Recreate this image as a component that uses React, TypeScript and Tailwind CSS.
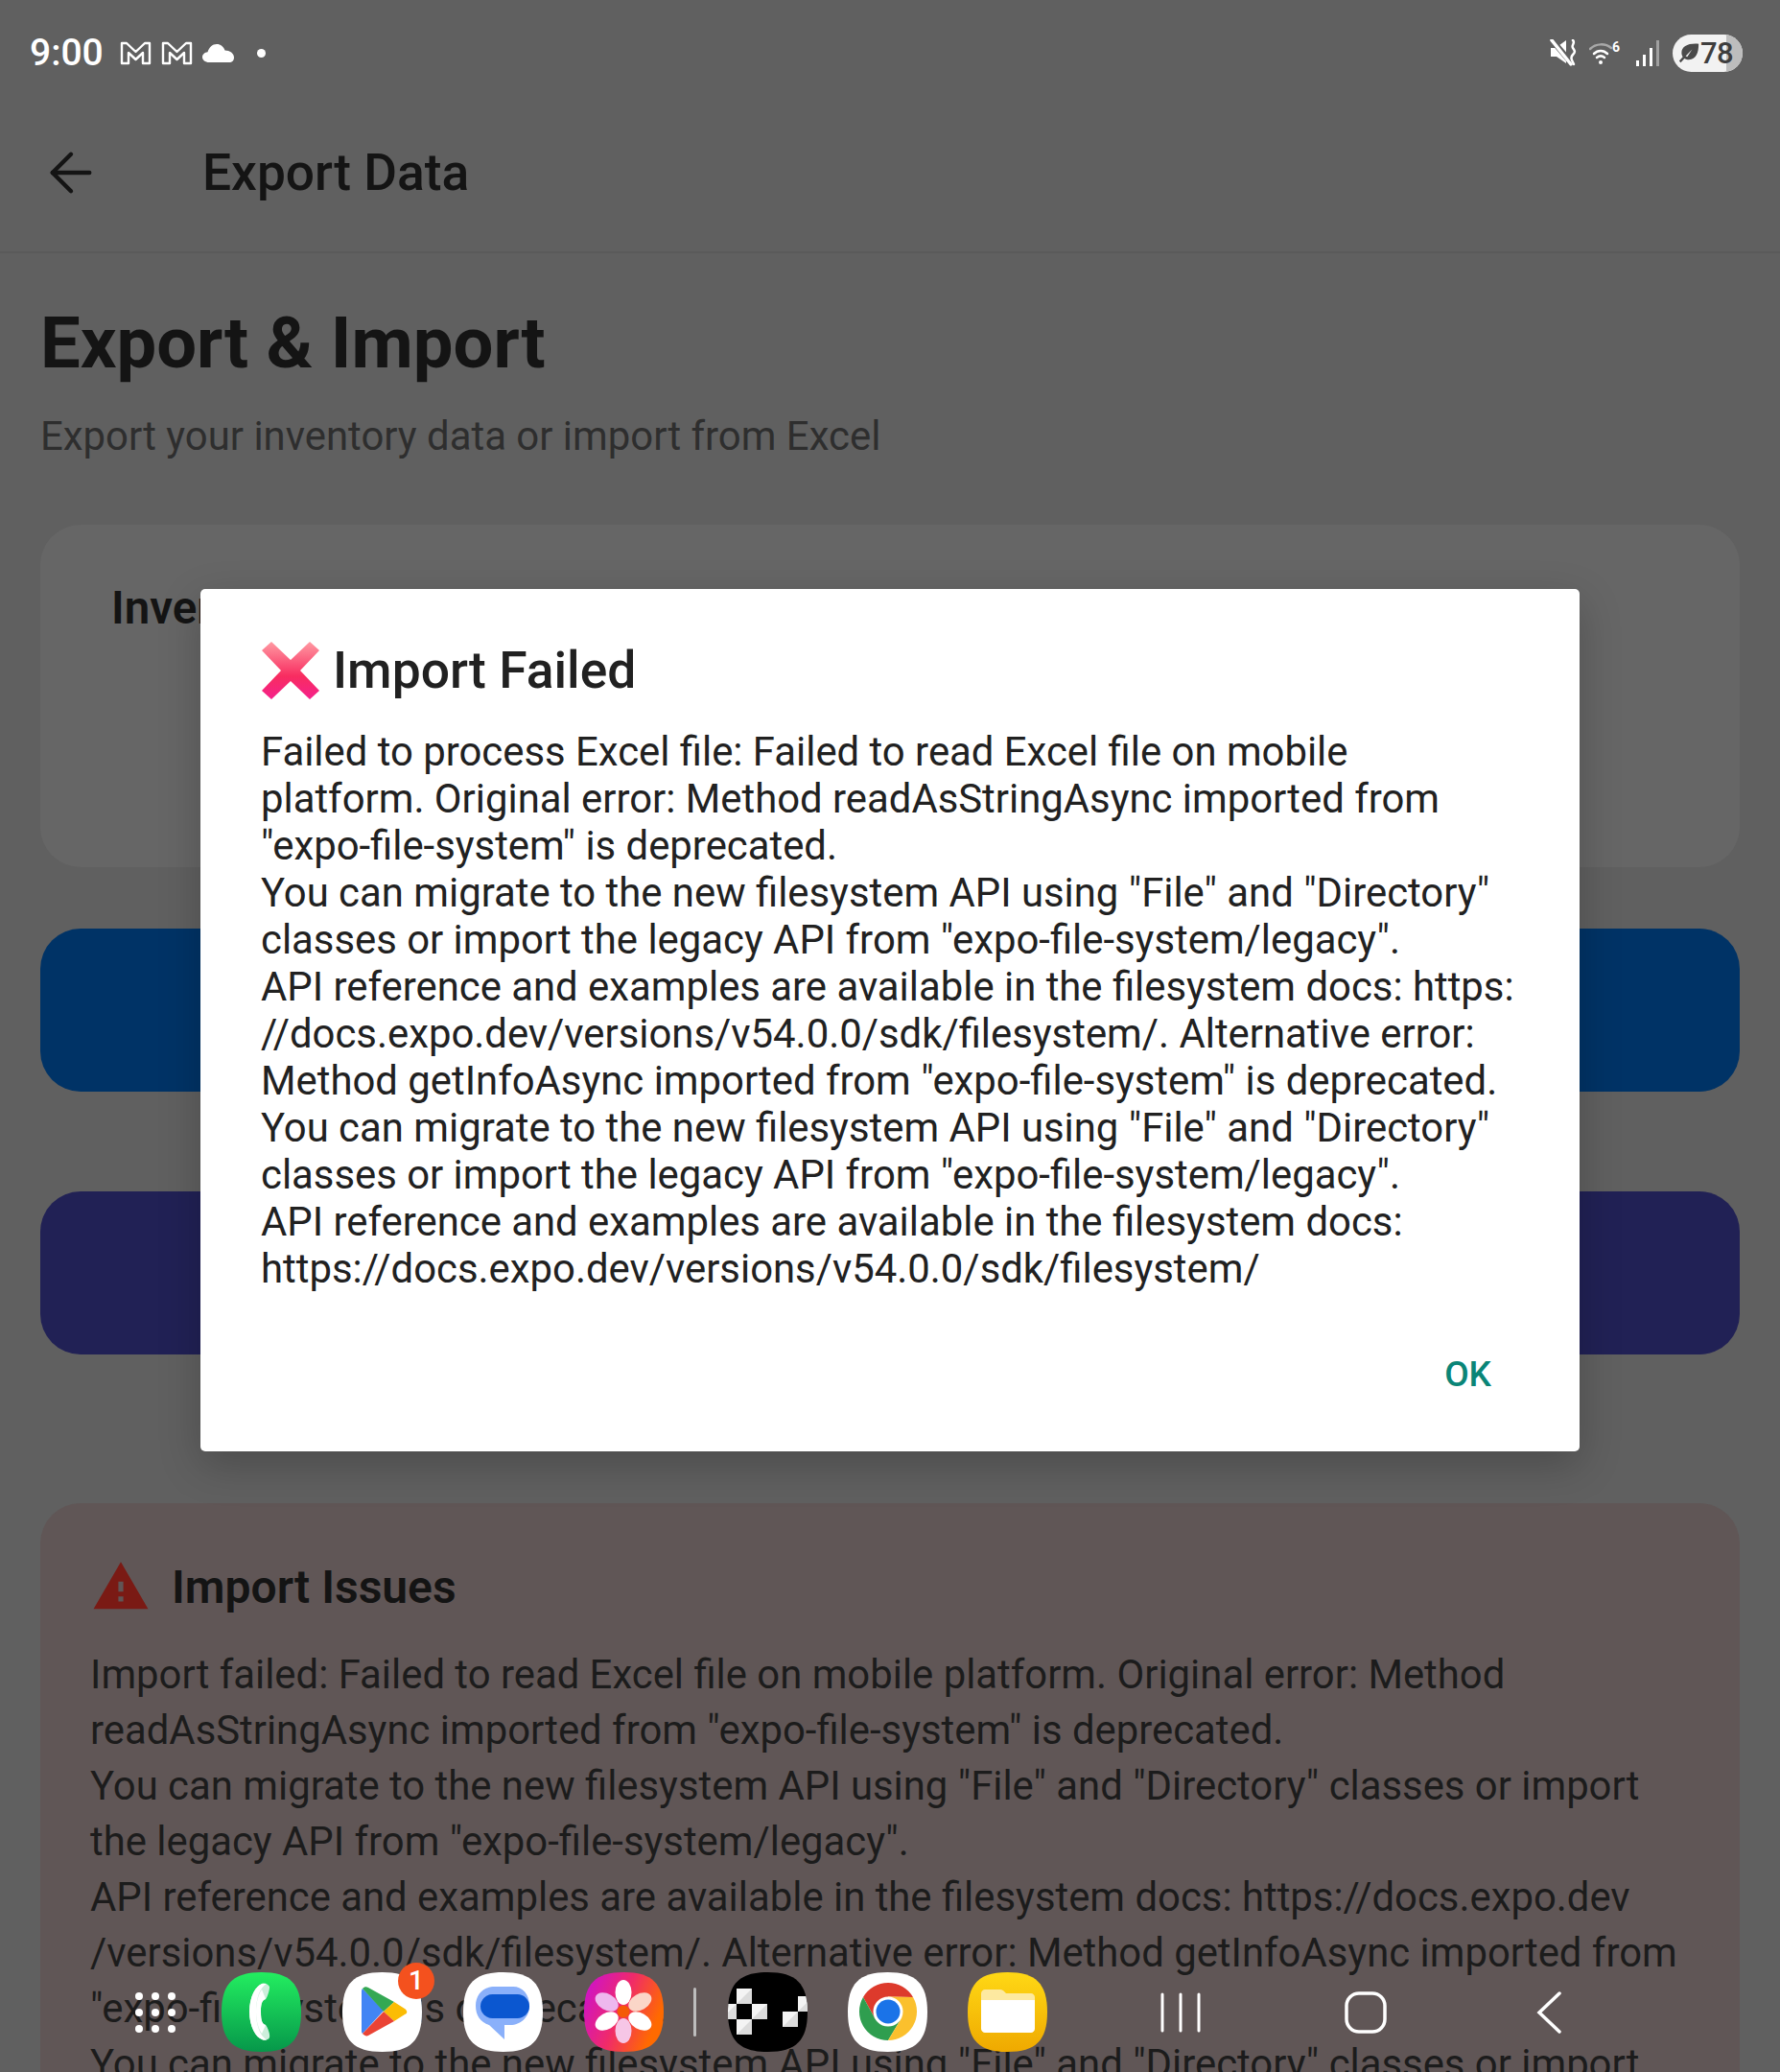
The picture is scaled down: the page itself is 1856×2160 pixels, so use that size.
import React from "react";
import { ArrowLeft } from "lucide-react";
import { MdWarning } from "react-icons/md";

const modalLines = [
  "Failed to process Excel file: Failed to read Excel file on mobile",
  'platform. Original error: Method readAsStringAsync imported from',
  '"expo-file-system" is deprecated.',
  'You can migrate to the new filesystem API using "File" and "Directory"',
  'classes or import the legacy API from "expo-file-system/legacy".',
  "API reference and examples are available in the filesystem docs: https:",
  "//docs.expo.dev/versions/v54.0.0/sdk/filesystem/. Alternative error:",
  'Method getInfoAsync imported from "expo-file-system" is deprecated.',
  'You can migrate to the new filesystem API using "File" and "Directory"',
  'classes or import the legacy API from "expo-file-system/legacy".',
  "API reference and examples are available in the filesystem docs:",
  "https://docs.expo.dev/versions/v54.0.0/sdk/filesystem/",
];

const issueLines = [
  "Import failed: Failed to read Excel file on mobile platform. Original error: Method",
  'readAsStringAsync imported from "expo-file-system" is deprecated.',
  'You can migrate to the new filesystem API using "File" and "Directory" classes or import',
  'the legacy API from "expo-file-system/legacy".',
  "API reference and examples are available in the filesystem docs: https://docs.expo.dev",
  "/versions/v54.0.0/sdk/filesystem/. Alternative error: Method getInfoAsync imported from",
  '"expo-file-system" is deprecated.',
  'You can migrate to the new filesystem API using "File" and "Directory" classes or import',
];

const SQUIRCLE = "M41.5 0C71 0 83 12 83 41.5C83 71 71 83 41.5 83C12 83 0 71 0 41.5C0 12 12 0 41.5 0Z";

const GmailIcon = () => (
  <svg width="33" height="25" viewBox="0 0 33 25" fill="none" stroke="white" strokeWidth="2.4" strokeLinejoin="round">
    <path d="M2 2h5l9.500 9 9.500-9h5v21h-7V12l-7.500 7-7.500-7v11H2z" />
  </svg>
);

const StatusLeft = () => (
  <div className="flex items-center">
    <span className="text-[39px] font-medium text-white leading-none">9:00</span>
    <div className="ml-[17px] flex gap-[10px]">
      <GmailIcon />
      <GmailIcon />
    </div>
    <svg className="ml-[10px]" width="33" height="19" viewBox="0 0 33 19" fill="white">
      <path d="M7 19C3 19 0 16.500 0 13.500C0 10.500 2.500 8.500 5.500 8.200C7 3.500 10.500 0 15 0C19 0 22 2.500 23.500 6.500C28.500 6.500 33 9.500 33 14C33 17 31 19 28 19Z" />
    </svg>
    <div className="ml-[24px] h-[9px] w-[9px] rounded-full bg-white" />
  </div>
);

const StatusRight = () => (
  <div className="flex items-center">
    <svg width="28" height="28" viewBox="0 0 28 28">
      <path d="M1 9H6L17 1V25L7 18H1Z" fill="white" />
      <path d="M0 -2L22 24" stroke="#606060" strokeWidth="6" />
      <path d="M2 1L22 26" stroke="white" strokeWidth="3.500" strokeLinecap="round" />
      <path d="M24 1c3 3-2 5 0 8s3 4 0 7-1 6 1 10" fill="none" stroke="white" strokeWidth="2.500" strokeLinecap="round" />
    </svg>
    <svg className="ml-[13px]" width="34" height="26" viewBox="0 0 34 26" fill="none" strokeLinecap="round">
      <path d="M1 9C7 3 17 3 23 8" stroke="#a8a8a8" strokeWidth="2.500" />
      <path d="M5 14C9 10 15 10 19 14" stroke="white" strokeWidth="2.500" />
      <path d="M8 18C10.500 16 13.500 16 16 18" stroke="white" strokeWidth="2.500" />
      <circle cx="12" cy="23" r="2" fill="white" />
      <text x="24" y="12" fontSize="14" fontWeight="700" fill="white">6</text>
    </svg>
    <div className="ml-[15px] flex h-[27px] items-end gap-[3.500px]">
      <div className="h-[6px] w-[3.500px] bg-white" />
      <div className="h-[12px] w-[3.500px] bg-white" />
      <div className="h-[19px] w-[3.500px] bg-white" />
      <div className="h-[27px] w-[3.500px] bg-[#a0a0a0]" />
    </div>
    <div className="relative ml-[14px] flex h-[39px] w-[73px] items-center overflow-hidden rounded-full bg-[#f2f2f2] pl-[6px]">
      <div className="absolute inset-y-0 right-0 w-[17px] bg-[#bdbdbd]" />
      <svg className="relative" width="22" height="22" viewBox="0 0 26 26" fill="#4a4a4a">
        <path d="M25 2C12 1 4 5 4 13c0 2 .5 3.500 1.500 5L1 23l2 2 4.500-5C9 21 11 21.500 13 21.500 22 21 25 13 25 2zM9 17l8-8-6 9z" />
      </svg>
      <span className="relative ml-[1px] text-[31px] leading-none font-medium tracking-[-0.5px] text-[#3e3e3e]">78</span>
    </div>
  </div>
);

const PhoneApp = () => (
  <svg width="83" height="83" viewBox="0 0 83 83">
    <defs>
      <linearGradient id="phoneBg" x1="0" y1="0" x2="0" y2="1">
        <stop offset="0" stopColor="#23ee60" />
        <stop offset="1" stopColor="#06974a" />
      </linearGradient>
    </defs>
    <path d={SQUIRCLE} fill="url(#phoneBg)" />
    <path d="M42 12C44 11 49 12 50 15C50.500 17 48 26 46 28C43 29 41 31 41 41C41 52 43 54 46 55C48 57 51 65 50 68C49 71 44 71 42 70C36 68 29 57 29 41C29 25 36 14 42 12Z" fill="#cdeedb" />
    <path d="M42 12C36 14 29 25 29 41C29 57 36 68 42 70C44 71 46 71 47 70.500C40 66 36 55 36 41C36 27 40 16 47 12C45 11.500 43.500 11.500 42 12Z" fill="white" />
    <path d="M41 41C41 52 43 54 46 55L42 64C38 58 36 50 36 41C36 32 38 24 42 18L46 28C43 29 41 31 41 41Z" fill="white" />
  </svg>
);

const PlayApp = () => (
  <div className="relative h-[83px] w-[83px]">
    <svg width="83" height="83" viewBox="0 0 83 83">
      <path d={SQUIRCLE} fill="white" />
      <path d="M21 17L43 40L21 64C20 63 20 62 20 60V21C20 19 20 18 21 17Z" fill="#4285f4" />
      <path d="M21 17C23 15 25 15 27 16L54 31L43 41Z" fill="#34a853" />
      <path d="M54 31L65 38C68 40 68 43 65 44L54 51L43 41Z" fill="#fbbc04" />
      <path d="M21 64L43 41L54 51L27 66C25 67 23 66 21 64Z" fill="#ea4335" />
    </svg>
    <div className="absolute -top-[10px] left-[58px] flex h-[38px] w-[38px] items-center justify-center rounded-full bg-[#f4511e] text-[28px] leading-none font-medium text-white">
      1
    </div>
  </div>
);

const MessagesApp = () => (
  <svg width="83" height="83" viewBox="0 0 83 83">
    <path d={SQUIRCLE} fill="white" />
    <path d="M33 15H52C62 15 69 23 69 35C69 47 60 55 49 55H43V70L27 55C18 52 13 45 13 35C13 23 21 15 33 15Z" fill="#8ab0fa" />
    <rect x="18" y="23" width="51" height="25" rx="12.500" fill="#0b57d0" />
  </svg>
);

const GalleryApp = () => (
  <svg width="83" height="83" viewBox="0 0 83 83">
    <defs>
      <linearGradient id="galleryBg" x1="0" y1="0" x2="1" y2="0.400">
        <stop offset="0" stopColor="#c80fd8" />
        <stop offset="0.550" stopColor="#f02a6a" />
        <stop offset="1" stopColor="#ff6a00" />
      </linearGradient>
    </defs>
    <path d={SQUIRCLE} fill="url(#galleryBg)" />
    <ellipse cx="41" cy="21" rx="8.500" ry="13" fill="white" />
    <ellipse cx="41" cy="61" rx="8.500" ry="13" fill="#f6c6e6" />
    <ellipse cx="41" cy="21" rx="8.500" ry="13" fill="#fbd6c8" transform="rotate(60 41 41)" />
    <ellipse cx="41" cy="21" rx="8.500" ry="13" fill="white" transform="rotate(120 41 41)" />
    <ellipse cx="41" cy="21" rx="8.500" ry="13" fill="white" transform="rotate(240 41 41)" />
    <ellipse cx="41" cy="21" rx="8.500" ry="13" fill="#eeb8ee" transform="rotate(300 41 41)" />
    <circle cx="41" cy="41" r="6.500" fill="#f45a06" />
  </svg>
);

const blackSquares: [number, number][] = [
  [9, 17],
  [-7, 33],
  [25, 33],
  [9, 49],
  [57, 41],
  [73, 25],
];

const BlackApp = () => (
  <svg width="83" height="83" viewBox="0 0 83 83">
    <defs>
      <clipPath id="blackClip">
        <path d={SQUIRCLE} />
      </clipPath>
    </defs>
    <path d={SQUIRCLE} fill="black" />
    <g clipPath="url(#blackClip)">
      {blackSquares.map(([x, y]) => (
        <g key={`${x}-${y}`}>
          <rect x={x} y={y} width="16" height="16" fill="#f4f4f4" />
          <path d={`M${x + 16} ${y}V${y + 16}H${x}Z`} fill="#dcdcdc" />
        </g>
      ))}
    </g>
  </svg>
);

const ChromeApp = () => (
  <svg width="83" height="83" viewBox="0 0 83 83">
    <path d={SQUIRCLE} fill="white" />
    <path d="M68 26A30 30 0 0 0 16 26L28.600 48.700L42 41L42 25.500Z" fill="#dd3a2c" />
    <path d="M16 26A30 30 0 0 0 42 71L55.400 48.700L42 41L28.600 48.700Z" fill="#2f9e4f" />
    <path d="M42 71A30 30 0 0 0 68 26L42 25.500L42 41L55.400 48.700Z" fill="#fbc02d" />
    <circle cx="42" cy="41" r="15.500" fill="white" />
    <circle cx="42" cy="41" r="12.500" fill="#1a73e8" />
  </svg>
);

const FilesApp = () => (
  <svg width="83" height="83" viewBox="0 0 83 83">
    <defs>
      <linearGradient id="filesBg" x1="0" y1="0" x2="0" y2="1">
        <stop offset="0" stopColor="#ffd815" />
        <stop offset="1" stopColor="#efa900" />
      </linearGradient>
    </defs>
    <path d={SQUIRCLE} fill="url(#filesBg)" />
    <path d="M14 22C14 20 16 18 18 18H34C36 18 37 19 38 20L40 22H66C68 22 70 24 70 26V32H14Z" fill="#fde9a0" />
    <path d="M14 29H70V59C70 61 68 63 66 63H18C16 63 14 61 14 59Z" fill="white" />
  </svg>
);

const AppsGrid = () => (
  <svg width="42" height="42" viewBox="0 0 42 42" fill="white">
    {[4, 21, 38].map((y) =>
      [4, 21, 38].map((x) => <circle key={`${x}-${y}`} cx={x} cy={y} r="4" />)
    )}
  </svg>
);

const NavButtons = () => (
  <div className="flex items-center">
    <svg width="42" height="42" viewBox="0 0 42 42" stroke="white" strokeWidth="3" strokeLinecap="round">
      <path d="M2 2v38M21 2v38M40 2v38" />
    </svg>
    <svg className="ml-[150px]" width="44" height="44" viewBox="0 0 44 44" fill="none" stroke="white" strokeWidth="3.500">
      <rect x="2" y="2" width="40" height="40" rx="13" />
    </svg>
    <svg className="ml-[156px]" width="27" height="44" viewBox="0 0 27 44" fill="none" stroke="white" strokeWidth="3.500" strokeLinecap="round">
      <path d="M24 2L3 22L24 42" />
    </svg>
  </div>
);

const Dock = () => (
  <div className="absolute left-[141px] top-[2056px] flex h-[83px] items-center">
    <AppsGrid />
    <div className="ml-[48px] flex gap-[43px]">
      <PhoneApp />
      <PlayApp />
      <MessagesApp />
      <GalleryApp />
    </div>
    <div className="ml-[31px] h-[51px] w-[3px] rounded-full bg-[#bdbdbd]" />
    <div className="ml-[33px] flex gap-[42px]">
      <BlackApp />
      <ChromeApp />
      <FilesApp />
    </div>
    <div className="ml-[118px]">
      <NavButtons />
    </div>
  </div>
);

const ImportFailedDialog = () => (
  <div className="absolute left-[209px] top-[614px] h-[899px] w-[1438px] rounded-[5px] bg-white pl-[63px] pr-[40px] pt-[54px] shadow-[0_14px_44px_rgba(0,0,0,0.22)]">
    <div className="flex h-[62px] items-center">
      <svg className="ml-[1px]" width="60" height="60" viewBox="0 0 60 60">
        <defs>
          <linearGradient id="crossFill" x1="0" y1="0" x2="0" y2="1">
            <stop offset="0" stopColor="#ff9aa2" />
            <stop offset="0.600" stopColor="#f82c60" />
            <stop offset="1" stopColor="#f5208c" />
          </linearGradient>
        </defs>
        <path d="M10 0L30 19L50 0L60 9L40 30L60 51L50 60L30 41L10 60L0 51L20 30L0 9Z" fill="url(#crossFill)" />
      </svg>
      <span className="ml-[14px] text-[53.400px] leading-none font-medium text-[#212121]">Import Failed</span>
    </div>
    <div className="mt-[29px] text-[41.850px] leading-[49px] text-[#212121]">
      {modalLines.map((line, i) => (
        <div key={i} className="whitespace-nowrap">
          {line}
        </div>
      ))}
    </div>
    <div className="mt-[64px] pr-[52px] text-right text-[37px] leading-[44px] font-medium text-[#0a8577]">OK</div>
  </div>
);

export default function App() {
  return (
    <div className="relative h-[2160px] w-[1856px] overflow-hidden bg-[#606060] font-['Roboto',sans-serif]">
      <header className="border-b-2 border-[#5a5a5a]">
        <div className="flex h-[110px] items-center justify-between pl-[31px] pr-[39px]">
          <StatusLeft />
          <StatusRight />
        </div>
        <div className="flex h-[152px] items-center pb-[10px] pl-[41px] text-[#141414]">
          <ArrowLeft size={66} strokeWidth={1.6} className="mb-[3px]" />
          <h1 className="ml-[104px] text-[53.300px] leading-none font-medium">Export Data</h1>
        </div>
      </header>

      <main className="px-[42px] pt-[50px]">
        <h2 className="text-[74.200px] leading-[88px] font-bold text-[#141414]">Export &amp; Import</h2>
        <p className="mt-[24px] text-[41.900px] leading-[58px] text-[#2e2e2e]">Export your inventory data or import from Excel</p>

        <section className="mt-[63px] h-[357px] rounded-[42px] bg-[#666666] px-[74px] pt-[62px]">
          <h3 className="text-[47.500px] leading-[50px] font-semibold text-[#141414]">Inventory</h3>
        </section>

        <div className="mt-[64px] h-[170px] rounded-[42px] bg-[#003366]" />
        <div className="mt-[104px] h-[170px] rounded-[42px] bg-[#212155]" />

        <section className="mt-[155px] h-[700px] rounded-[42px] bg-[#605656] px-[52px] pt-[63px]">
          <div className="flex h-[50px] items-center text-[#141414]">
            <MdWarning size={62} className="mb-[3px] ml-[1px] text-[#7a1a14]" />
            <h3 className="ml-[22px] text-[48px] leading-[50px] font-semibold">Import Issues</h3>
          </div>
          <div className="mt-[37px] text-[41.850px] leading-[58px] text-[#1c1c1c]">
            {issueLines.map((line, i) => (
              <div key={i} className="whitespace-nowrap">
                {line}
              </div>
            ))}
          </div>
        </section>
      </main>

      <ImportFailedDialog />
      <Dock />
    </div>
  );
}
